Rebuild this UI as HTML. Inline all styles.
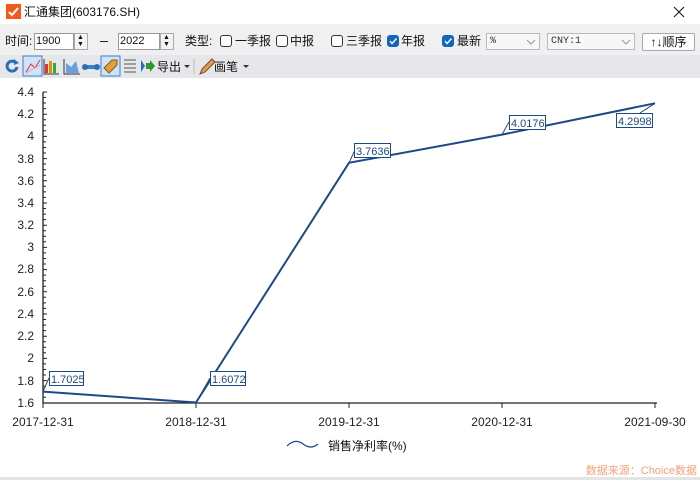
<!DOCTYPE html>
<html><head><meta charset="utf-8"><style>
*{margin:0;padding:0;box-sizing:border-box}
body{width:700px;height:480px;overflow:hidden;background:#fff;font-family:"Liberation Sans","Noto Sans CJK SC",sans-serif;font-size:12px;color:#111;position:relative}
.abs{position:absolute;line-height:16px}
.t{top:33px}
.cb{position:absolute;width:12px;height:12px;border:1px solid #333;border-radius:3px;background:#fff;top:35px}
.cb.on{background:#1565c0;border-color:#1565c0}
.inp{position:absolute;height:17px;border:1px solid #999;background:#fff;font-size:11px;line-height:15px;padding-left:1px}
.spin{position:absolute;width:14px;height:17px;border:1px solid #aaa;background:#f4f4f4}
.sel{position:absolute;height:17px;border:1px solid #bbb;background:#f7f7f7;font-family:"Liberation Mono",monospace;font-size:10px;line-height:15px;padding-left:3px;color:#333}
</style></head><body>
<div class="abs" style="left:0;top:0;width:700px;height:24px;background:#fff"></div>
<div class="abs" style="left:6px;top:4px;width:15px;height:15px;background:#f25a1d"></div>
<svg class="abs" style="left:6px;top:4px" width="15" height="15"><path d="M3 8 L6 11 L12 4" stroke="#fff" stroke-width="2" fill="none"/></svg>
<div class="abs" style="left:24px;top:4px;font-size:12px">汇通集团(603176.SH)</div>
<svg class="abs" style="left:673px;top:6px" width="12" height="12"><path d="M1 1L11 11M11 1L1 11" stroke="#222" stroke-width="1.2"/></svg>
<div class="abs" style="left:0;top:24px;width:700px;height:31px;background:#f0f0f0"></div>
<div class="abs t" style="left:5px">时间:</div>
<div class="inp" style="left:34px;top:33px;width:40px">1900</div>
<div class="spin" style="left:74px;top:33px"></div>
<div class="abs" style="left:77px;top:34px;font-size:7px;line-height:7px">▲<br>▼</div>
<div class="abs" style="left:100px;top:41px;width:8px;height:1px;background:#222"></div>
<div class="inp" style="left:118px;top:33px;width:42px">2022</div>
<div class="spin" style="left:160px;top:33px"></div>
<div class="abs" style="left:163px;top:34px;font-size:7px;line-height:7px">▲<br>▼</div>
<div class="abs t" style="left:185px">类型:</div>
<div class="cb" style="left:220px"></div><div class="abs t" style="left:235px">一季报</div>
<div class="cb" style="left:276px"></div><div class="abs t" style="left:290px">中报</div>
<div class="cb" style="left:331px"></div><div class="abs t" style="left:346px">三季报</div>
<div class="cb on" style="left:387px"></div><svg class="abs" style="left:387px;top:35px" width="12" height="12"><path d="M3 6L5 8.5L9.5 3.5" stroke="#fff" stroke-width="1.4" fill="none"/></svg><div class="abs t" style="left:401px">年报</div>
<div class="cb on" style="left:442px"></div><svg class="abs" style="left:442px;top:35px" width="12" height="12"><path d="M3 6L5 8.5L9.5 3.5" stroke="#fff" stroke-width="1.4" fill="none"/></svg><div class="abs t" style="left:457px">最新</div>
<div class="sel" style="left:486px;top:33px;width:54px">%</div>
<svg class="abs" style="left:526px;top:39px" width="10" height="6"><path d="M1 1L5 5L9 1" stroke="#999" fill="none"/></svg>
<div class="sel" style="left:547px;top:33px;width:88px">CNY:1</div>
<svg class="abs" style="left:621px;top:39px" width="10" height="6"><path d="M1 1L5 5L9 1" stroke="#999" fill="none"/></svg>
<div class="abs" style="left:642px;top:33px;width:53px;height:18px;border:1px solid #aaa;border-radius:2px;background:#fdfdfd;text-align:center;line-height:16px">↑↓顺序</div>
<div class="abs" style="left:0;top:55px;width:700px;height:23px;background:#e6e7ea"></div>
<svg class="abs" style="left:0;top:55px" width="260" height="23">
<path d="M16 8A5 5 0 1 0 17 12" stroke="#2a6fb5" stroke-width="3" fill="none"/><path d="M14 4L19 8L14 10Z" fill="#2a6fb5"/>
<rect x="23" y="1" width="19" height="20" fill="#cfe3f7" stroke="#3b82d1"/>
<path d="M26 17L31 9L35 13L40 5" stroke="#d33" fill="none"/><path d="M26 18L40 10" stroke="#e9a" fill="none"/>
<rect x="45" y="9" width="3" height="9" fill="#d33"/><rect x="49" y="6" width="3" height="12" fill="#e80"/><rect x="53" y="8" width="3" height="10" fill="#3a3"/><path d="M44 4V19H59" stroke="#333" fill="none"/>
<path d="M66 18L66 8L71 12L76 6L79 18Z" fill="#6aa0e0"/><path d="M64 4V19H80" stroke="#333" fill="none"/>
<rect x="84" y="10" width="14" height="4" fill="#3a7fc8"/><circle cx="85" cy="12" r="3" fill="#2a6fb5"/><circle cx="97" cy="12" r="3" fill="#2a6fb5"/>
<rect x="101" y="1" width="19" height="20" fill="#cfe3f7" stroke="#3b82d1"/>
<path d="M104 13L112 5L117 5L117 10L109 18Z" fill="#e0a040" stroke="#8a5a10"/>
<path d="M124 5H136M124 9H136M124 13H136M124 17H136" stroke="#555"/>
<path d="M141 5L145 11L141 17Z" fill="#2a6fb5"/><path d="M146 8H150V5L155 11L150 17V14H146Z" fill="#2a9a2a"/>
<text x="157" y="16" font-size="12" font-family="Noto Sans CJK SC,sans-serif" fill="#111">导出</text>
<path d="M184 10L190 10L187 13Z" fill="#333"/>
<path d="M194 4V19" stroke="#bbb"/>
<path d="M200 19L202 14L212 4L215 7L205 17Z" fill="#e0a040" stroke="#744"/>
<text x="214" y="16" font-size="12" font-family="Noto Sans CJK SC,sans-serif" fill="#111">画笔</text>
<path d="M243 10L249 10L246 13Z" fill="#333"/>
</svg>
<svg class="abs" style="left:0;top:78px" width="700" height="400" font-family="Liberation Sans,sans-serif" font-size="12">
<g transform="translate(0,-78)">
<path d="M43 92V403H657" stroke="#222" fill="none" stroke-width="1.3"/>
<g stroke="#222">
<path d="M43 92H47M43 114.2H47M43 136.4H47M43 158.6H47M43 180.8H47M43 203H47M43 225.2H47M43 247.4H47M43 269.6H47M43 291.8H47M43 314H47M43 336.2H47M43 358.4H47M43 380.6H47M43 403H47"/>
<path d="M43 97.5H46M43 103H46M43 108.6H46M43 119.7H46M43 125.3H46M43 130.8H46M43 141.9H46M43 147.5H46M43 153H46M43 164H46M43 169.7H46M43 175.2H46M43 186.3H46M43 191.9H46M43 197.4H46M43 208.5H46M43 214.1H46M43 219.6H46M43 230.7H46M43 236.3H46M43 241.8H46M43 252.9H46M43 258.5H46M43 264H46M43 275.1H46M43 280.7H46M43 286.2H46M43 297.3H46M43 302.9H46M43 308.4H46M43 319.5H46M43 325.1H46M43 330.6H46M43 341.7H46M43 347.3H46M43 352.8H46M43 363.9H46M43 369.5H46M43 375H46M43 386.1H46M43 391.7H46M43 397.2H46"/>
<path d="M43 403V408M196 403V408M349 403V408M502 403V408M655 403V408"/>
</g>
<g text-anchor="end" fill="#222">
<text x="34" y="96">4.4</text><text x="34" y="118">4.2</text><text x="34" y="140">4</text><text x="34" y="163">3.8</text><text x="34" y="185">3.6</text><text x="34" y="207">3.4</text><text x="34" y="229">3.2</text><text x="34" y="251">3</text><text x="34" y="273">2.8</text><text x="34" y="296">2.6</text><text x="34" y="318">2.4</text><text x="34" y="340">2.2</text><text x="34" y="362">2</text><text x="34" y="385">1.8</text><text x="34" y="407">1.6</text>
</g>
<g text-anchor="middle" fill="#222">
<text x="43" y="426">2017-12-31</text><text x="196" y="426">2018-12-31</text><text x="349" y="426">2019-12-31</text><text x="502" y="426">2020-12-31</text><text x="655" y="426">2021-09-30</text>
</g>
<path d="M43 391.6L196 402.5L349 162.8L502 134.6L655 103.3" stroke="#1d4a86" stroke-width="2" fill="none"/>
<g stroke="#1d4a86" fill="#fff" stroke-width="1">
<path d="M43 391.6L49 378M196 402.5L210 378M349 162.8L355 150M502 134.6L509 122M655 103.3L640 113" fill="none"/>
<rect x="49.5" y="371.5" width="34" height="14"/><rect x="210.5" y="371.5" width="35" height="14"/><rect x="354.5" y="143.5" width="36" height="14"/><rect x="509.5" y="115.5" width="36" height="14"/><rect x="616.5" y="113.5" width="36" height="14"/>
</g>
<g fill="#1d4a86" font-size="11">
<text x="51" y="383">1.7025</text><text x="212" y="383">1.6072</text><text x="356" y="155">3.7636</text><text x="511" y="127">4.0176</text><text x="618" y="125">4.2998</text>
</g>
<path d="M287 446Q295 438 303 444T318 444" stroke="#1d4a86" stroke-width="1.2" fill="none"/>
<text x="328" y="450" font-family="Liberation Sans,Noto Sans CJK SC,sans-serif" fill="#111">销售净利率(%)</text>
<text x="697" y="474" text-anchor="end" font-size="11" fill="#f5a07a" font-family="Liberation Sans,Noto Sans CJK SC,sans-serif">数据来源：Choice数据</text>
</g></svg>
<div class="abs" style="left:0;top:477px;width:700px;height:3px;background:#e4e4e4"></div>
</body></html>
